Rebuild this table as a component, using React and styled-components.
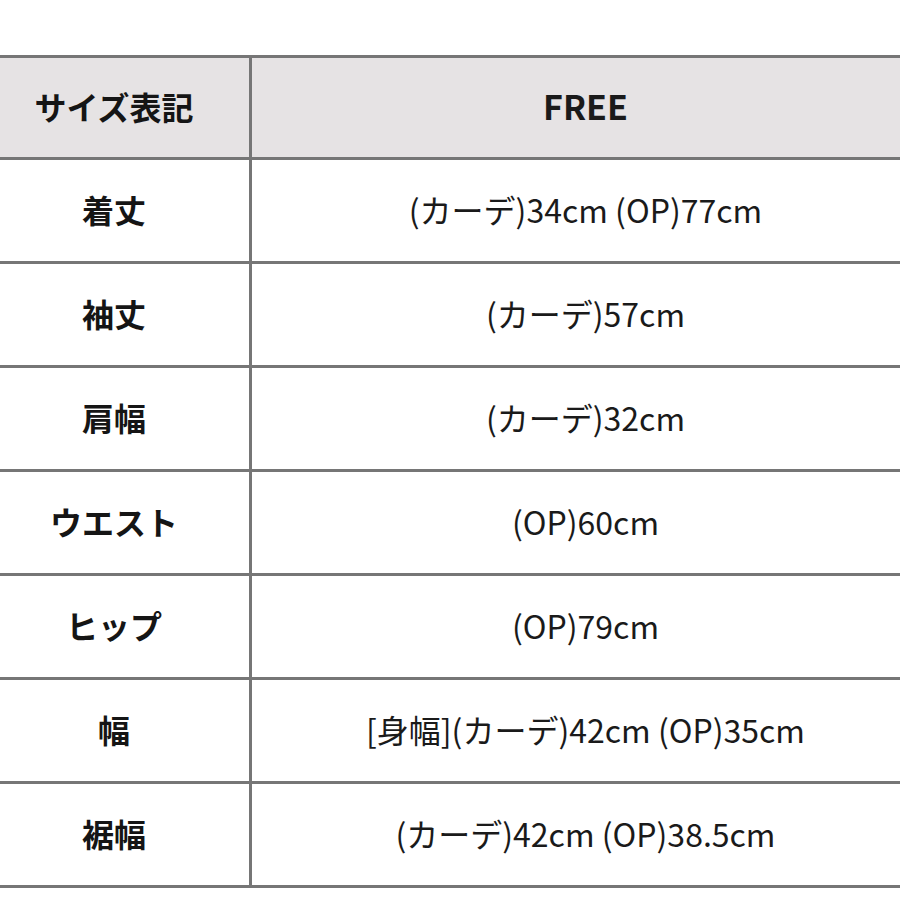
import React from "react";
import styled, { createGlobalStyle } from "styled-components";

const Global = createGlobalStyle`
  html, body { margin: 0; padding: 0; background: #ffffff; }
  body { font-family: "Noto Sans CJK JP", "Noto Sans", sans-serif; color: #1a1a1a; overflow: hidden; }
`;

const Page = styled.div`
  width: 900px;
  height: 900px;
  padding-top: 55px;
  box-sizing: border-box;
  overflow: hidden;
`;

const Table = styled.table`
  border-collapse: collapse;
  width: 946px;
  margin-left: -24px;
  table-layout: fixed;
`;

const Row = styled.tr`
  height: ${(p) => (p.$header ? "102px" : "104px")};
  background: ${(p) => (p.$header ? "#e6e3e4" : "#ffffff")};
`;

const Label = styled.th`
  width: 270px;
  border: 3px solid #767676;
  font-weight: 700;
  font-size: 32px;
  text-align: center;
  vertical-align: middle;
  padding: 0 0 4px;
  color: #151515;
`;

const Value = styled.td`
  border: 3px solid #767676;
  font-weight: ${(p) => (p.$header ? 700 : 400)};
  font-size: ${(p) => (p.$header ? "34px" : "32px")};
  text-align: center;
  vertical-align: middle;
  padding: 0 0 4px;
  color: #1a1a1a;
`;

const rows = [
  ["着丈", "(カーデ)34cm (OP)77cm"],
  ["袖丈", "(カーデ)57cm"],
  ["肩幅", "(カーデ)32cm"],
  ["ウエスト", "(OP)60cm"],
  ["ヒップ", "(OP)79cm"],
  ["幅", "[身幅](カーデ)42cm (OP)35cm"],
  ["裾幅", "(カーデ)42cm (OP)38.5cm"],
];

export default function App() {
  return (
    <Page>
      <Global />
      <Table>
        <tbody>
          <Row $header>
            <Label>サイズ表記</Label>
            <Value $header>FREE</Value>
          </Row>
          {rows.map(([k, v]) => (
            <Row key={k}>
              <Label>{k}</Label>
              <Value>{v}</Value>
            </Row>
          ))}
        </tbody>
      </Table>
    </Page>
  );
}
